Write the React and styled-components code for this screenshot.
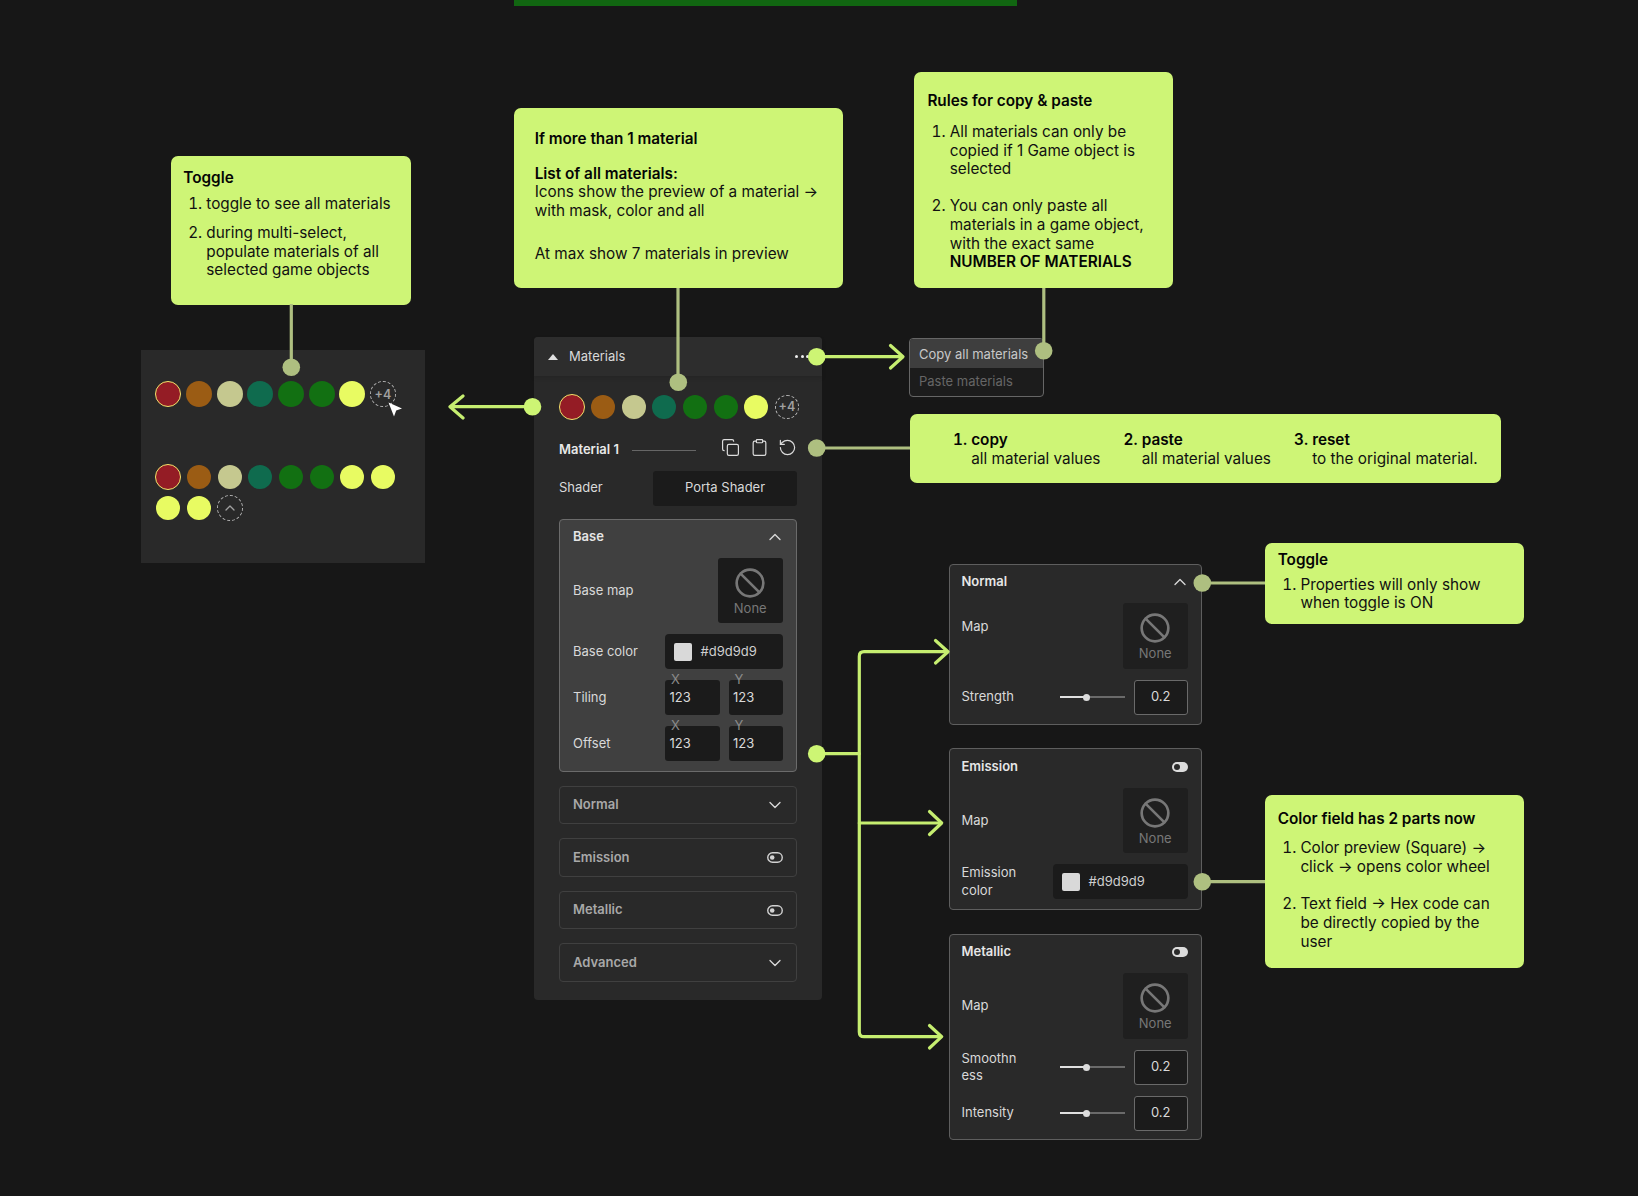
import React from "react";
import styled, { createGlobalStyle } from "styled-components";
import { Ban, ChevronDown, ChevronUp, Clipboard, Copy, RotateCcw } from "lucide-react";

const Global = createGlobalStyle`
  html, body { margin: 0; padding: 0; background: #171717; }
  body { font-family: Inter, "Liberation Sans", sans-serif; overflow: hidden; }
  * { box-sizing: border-box; }
`;

const Canvas = styled.div`
  position: relative;
  width: 1638px;
  height: 1196px;
  background: #171717;
  overflow: hidden;
`;

const TopBar = styled.div`
  position: absolute;
  left: 514px;
  top: 0;
  width: 503px;
  height: 6px;
  background: #116611;
`;

const Callout = styled.div`
  position: absolute;
  left: ${(p) => p.$x}px;
  top: ${(p) => p.$y}px;
  width: ${(p) => p.$w}px;
  height: ${(p) => p.$h}px;
  padding: ${(p) => p.$pt}px 0 0 ${(p) => p.$pl}px;
  background: #cef576;
  border-radius: 7px;
  color: #111;
  font-size: 15.3px;
  line-height: 18.67px;
  white-space: nowrap;
`;

const Title = styled.div`
  font-weight: 600;
  color: #050505;
  margin-bottom: ${(p) => p.$mb || 0}px;
`;

const Para = styled.div`
  margin-top: ${(p) => p.$mt || 0}px;
`;

const Strong = styled.span`
  font-weight: 600;
  color: #050505;
`;

const List = styled.ol`
  margin: 0;
  padding: 0 0 0 ${(p) => p.$indent || 23}px;
  display: flex;
  flex-direction: column;
  gap: ${(p) => p.$gap || 0}px;
`;

const Columns = styled.div`
  display: grid;
  grid-template-columns: repeat(3, 170.5px);
`;

const BoldList = styled.ol`
  margin: 0;
  padding: 0;
  li::marker { font-weight: 600; color: #050505; }
`;

const PreviewPanel = styled.div`
  position: absolute;
  left: 141px;
  top: 350px;
  width: 284px;
  height: 213px;
  padding: 31px 12px;
  background: #292929;
`;

const SwatchGrid = styled.div`
  display: grid;
  grid-template-columns: repeat(8, 30.67px);
  grid-auto-rows: 26px;
  row-gap: 5px;
  margin: ${(p) => p.$m || "0"};
`;

const Cell = styled.div`
  display: flex;
  align-items: center;
  justify-content: center;
`;

const Dot = styled.div`
  width: ${(p) => p.$d}px;
  height: ${(p) => p.$d}px;
  border-radius: 50%;
  background: ${(p) => p.$c};
  border: ${(p) => (p.$ring ? "1px solid #f2e46b" : "none")};
`;

const MoreDot = styled.div`
  width: ${(p) => p.$d}px;
  height: ${(p) => p.$d}px;
  border-radius: 50%;
  border: 1px dashed #b5b5b5;
  display: flex;
  align-items: center;
  justify-content: center;
  font-size: 12.5px;
  font-weight: 600;
  color: #a0a0a0;
`;

const Panel = styled.div`
  position: absolute;
  left: 534px;
  top: 337px;
  width: 288px;
  height: 663px;
  background: #292929;
  border-radius: 4px;
  color: #d9d9d9;
  font-size: 13px;
  line-height: 17.5px;
`;

const PanelHeader = styled.div`
  height: 39px;
  padding-left: 14px;
  display: flex;
  align-items: center;
  gap: 11px;
  background: #2d2d2d;
  border-radius: 4px 4px 0 0;
  box-shadow: 0 2px 4px rgba(0, 0, 0, 0.12);
`;

const Caret = styled.div`
  width: 0;
  height: 0;
  border-left: 5px solid transparent;
  border-right: 5px solid transparent;
  border-bottom: 6px solid #e0e0e0;
`;

const More = styled.div`
  margin-left: auto;
  margin-right: 13px;
  display: flex;
  gap: 2.5px;
`;

const Pip = styled.span`
  width: 3px;
  height: 3px;
  border-radius: 50%;
  background: #eee;
`;

const PanelBody = styled.div`
  padding: 18px 25px 0;
  display: flex;
  flex-direction: column;
`;

const MaterialRow = styled.div`
  margin-top: 20px;
  height: 20px;
  display: flex;
  align-items: center;
`;

const MaterialName = styled.div`
  font-weight: 600;
  color: #e8e8e8;
  width: 73px;
  flex: none;
`;

const Rule = styled.div`
  width: 64px;
  height: 1px;
  background: #666;
`;

const Tools = styled.div`
  margin-left: auto;
  margin-bottom: 5px;
  display: flex;
  align-items: center;
  gap: 9.4px;
  color: #dcdcdc;
`;

const Row = styled.div`
  display: flex;
  align-items: center;
  justify-content: space-between;
`;

const ShaderRow = styled(Row)`
  margin-top: 10.5px;
  margin-bottom: 13.5px;
`;

const ShaderSelect = styled.div`
  width: 144px;
  height: 35px;
  background: #1b1b1b;
  border-radius: 3px;
  display: flex;
  align-items: center;
  justify-content: center;
`;

const BaseBox = styled.div`
  height: 253px;
  padding: 8px 13px 0;
  background: #404040;
  border: 1px solid #6b6b6b;
  border-radius: 4px;
  display: flex;
  flex-direction: column;
  gap: 11px;
`;

const SectionHead = styled.div`
  display: flex;
  align-items: center;
  justify-content: space-between;
  height: 18px;
  margin-bottom: 1.2px;
  font-weight: 600;
  color: #e6e6e6;
`;

const HeadIcon = styled.span`
  display: flex;
  width: 20px;
  justify-content: center;
  margin-right: -2px;
  color: #d8d8d8;
`;

const NoneBox = styled.div`
  width: 65.5px;
  height: 65.3px;
  flex: none;
  background: ${(p) => p.$bg || "#1f1f1f"};
  border-radius: 3px;
  display: flex;
  flex-direction: column;
  align-items: center;
  padding-top: 9px;
  color: #777;
  font-size: 13px;
  line-height: 18px;
`;

const ColorField = styled.div`
  width: ${(p) => p.$w}px;
  height: 35px;
  background: #1b1b1b;
  border-radius: 4px;
  padding-left: 9px;
  display: flex;
  align-items: center;
  gap: 8.5px;
  color: #cfcfcf;
`;

const Swatch = styled.div`
  width: 18px;
  height: 18px;
  border-radius: 2px;
  background: #d9d9d9;
`;

const Pair = styled.div`
  display: flex;
  gap: 9px;
`;

const NumField = styled.div`
  position: relative;
  width: 54.5px;
  height: 35px;
  background: #1b1b1b;
  border-radius: 3px;
  padding-left: 4.5px;
  display: flex;
  align-items: center;
  color: #d9d9d9;
`;

const Axis = styled.span`
  position: absolute;
  left: 6px;
  top: -9px;
  color: #8a8a8a;
`;

const Collapsed = styled.div`
  height: 38.8px;
  margin-top: 13.7px;
  padding: 0 13px;
  border: 1px solid #404040;
  border-radius: 4px;
  display: flex;
  align-items: center;
  justify-content: space-between;
  font-weight: 600;
  color: #a8a8a8;
`;

const Card = styled.div`
  position: absolute;
  left: 948.5px;
  top: ${(p) => p.$y}px;
  width: 253.5px;
  height: ${(p) => p.$h}px;
  padding: 8.5px 13px 0 12px;
  background: #292929;
  border: 1px solid #5e5e5e;
  border-radius: 4px;
  color: #d9d9d9;
  font-size: 13px;
  line-height: 17.5px;
  display: flex;
  flex-direction: column;
  gap: 11px;
`;

const CardLabel = styled.div`
  width: 60px;
  overflow-wrap: anywhere;
`;

const RaisedLabel = styled.div`
  padding-bottom: 18px;
`;

const Slider = styled.div`
  position: relative;
  width: 65px;
  height: 2px;
  margin-left: auto;
  background: #6a6a6a;
`;

const SliderFill = styled.div`
  position: absolute;
  left: 0;
  top: 0;
  height: 100%;
  width: 40%;
  background: #e0e0e0;
`;

const Thumb = styled.div`
  position: absolute;
  left: 23px;
  top: -2.5px;
  width: 7px;
  height: 7px;
  border-radius: 50%;
  background: #dcdcdc;
`;

const ValueBox = styled.div`
  width: 54.5px;
  height: 35px;
  margin-left: 8.5px;
  background: #1b1b1b;
  border: 1px solid #6a6a6a;
  border-radius: 3px;
  display: flex;
  align-items: center;
  justify-content: center;
`;

const Menu = styled.div`
  position: absolute;
  left: 909px;
  top: 338px;
  width: 135px;
  height: 59px;
  background: #1c1c1c;
  border: 1px solid #666;
  border-radius: 4px;
  overflow: hidden;
  font-size: 13px;
`;

const MenuItem = styled.div`
  height: ${(p) => p.$h}px;
  padding-left: 9px;
  display: flex;
  align-items: center;
  background: ${(p) => (p.$active ? "#3e3e3e" : "transparent")};
  color: ${(p) => (p.$active ? "#c8c8c8" : "#666")};
`;

const Overlay = styled.svg`
  position: absolute;
  left: 0;
  top: 0;
  pointer-events: none;
`;

const PALETTE = ["#941c25", "#9b5c14", "#c5c88f", "#0f6b4e", "#127012", "#127012", "#e8fb62"];
const Y = "#e8fb62";

function NonePreview({ bg }) {
  return (
    <NoneBox $bg={bg}>
      <Ban size={32} strokeWidth={2} />
      <div>None</div>
    </NoneBox>
  );
}

function Swatches({ d = 24 }) {
  return PALETTE.map((c, i) => (
    <Cell key={i}>
      <Dot $c={c} $d={i === 0 ? 26 : d} $ring={i === 0} />
    </Cell>
  ));
}

function FilledToggle() {
  return (
    <svg width="16" height="10" viewBox="0 0 16 10">
      <rect width="16" height="10" rx="5" fill="#dcdcdc" />
      <circle cx="5" cy="5" r="3" fill="#2a2a2a" />
    </svg>
  );
}

function OutlineToggle() {
  return (
    <svg width="16" height="11" viewBox="0 0 16 11">
      <rect x="0.75" y="0.75" width="14.5" height="9.5" rx="4.75" fill="none" stroke="#d2d2d2" strokeWidth="1.4" />
      <circle cx="5.2" cy="5.5" r="2.3" fill="#d2d2d2" />
    </svg>
  );
}

function SliderRow({ label }) {
  return (
    <Row>
      <CardLabel>{label}</CardLabel>
      <Slider>
        <SliderFill />
        <Thumb />
      </Slider>
      <ValueBox>0.2</ValueBox>
    </Row>
  );
}

const MUTED = "#aebf80";
const BRIGHT = "#c6ee70";
const DOT = "#cdf574";

function Connectors() {
  return (
    <Overlay width="1638" height="1196" viewBox="0 0 1638 1196" fill="none">
      <g stroke={MUTED} strokeWidth="3.2">
        <path d="M291.3 304V367" />
        <path d="M678 288V382" />
        <path d="M1043.8 288V350" />
        <path d="M817 448H910" />
        <path d="M1202 583H1265" />
        <path d="M1202 881.7H1265" />
      </g>
      <g stroke={BRIGHT} strokeWidth="3.2" strokeLinecap="round" strokeLinejoin="round">
        <path d="M532 406.7H451M463 396L450 406.7L463 418" />
        <path d="M817 356.7H902M890.5 345.5L903 356.7L890.5 368" />
        <path d="M817 753.7H859.3" />
        <path d="M946 651.7H864Q859.3 651.7 859.3 656.4V1032Q859.3 1036.7 864 1036.7H940" />
        <path d="M859.3 823H940" />
        <path d="M935.5 640.5L948 651.7L935.5 663" />
        <path d="M929.5 811.5L941.7 823L929.5 834.5" />
        <path d="M929.5 1025.5L941.7 1036.7L929.5 1048" />
      </g>
      <g fill={MUTED}>
        <circle cx="291.3" cy="367.3" r="8.8" />
        <circle cx="678.3" cy="382.3" r="8.8" />
        <circle cx="1043.7" cy="350.7" r="8.8" />
        <circle cx="816.7" cy="448" r="8.8" />
        <circle cx="1202.3" cy="583" r="8.8" />
        <circle cx="1202.3" cy="881.7" r="8.8" />
      </g>
      <g fill={DOT}>
        <circle cx="532.5" cy="406.7" r="8.8" />
        <circle cx="816.7" cy="356.7" r="8.8" />
        <circle cx="816.7" cy="753.7" r="8.8" />
      </g>
      <path d="M388.5 402.5L402 408.5L396.2 410.6L394 416.5Z" fill="#fff" />
    </Overlay>
  );
}

export default function App() {
  return (
    <Canvas>
      <Global />
      <TopBar />

      <Callout $x={171.3} $y={156} $w={239.7} $h={149} $pt={13.2} $pl={12}>
        <Title $mb={7.3}>Toggle</Title>
        <List $gap={10}>
          <li>toggle to see all materials</li>
          <li>
            during multi-select,
            <br />
            populate materials of all
            <br />
            selected game objects
          </li>
        </List>
      </Callout>

      <Callout $x={514} $y={108.3} $w={329} $h={180.2} $pt={22.2} $pl={20.7}>
        <Title $mb={15.4}>If more than 1 material</Title>
        <Title>List of all materials:</Title>
        <Para>
          Icons show the preview of a material →
          <br />
          with mask, color and all
        </Para>
        <Para $mt={24}>At max show 7 materials in preview</Para>
      </Callout>

      <Callout $x={914} $y={72.3} $w={259.3} $h={215.5} $pt={19.9} $pl={13.4}>
        <Title $mb={12}>Rules for copy &amp; paste</Title>
        <List $gap={18.6} $indent={22.3}>
          <li>
            All materials can only be
            <br />
            copied if 1 Game object is
            <br />
            selected
          </li>
          <li>
            You can only paste all
            <br />
            materials in a game object,
            <br />
            with the exact same
            <br />
            <Strong>NUMBER OF MATERIALS</Strong>
          </li>
        </List>
      </Callout>

      <Callout $x={909.7} $y={413.7} $w={591} $h={69} $pt={17.5} $pl={61.5}>
        <Columns>
          <BoldList start={1}>
            <li>
              <Strong>copy</Strong>
              <br />
              all material values
            </li>
          </BoldList>
          <BoldList start={2}>
            <li>
              <Strong>paste</Strong>
              <br />
              all material values
            </li>
          </BoldList>
          <BoldList start={3}>
            <li>
              <Strong>reset</Strong>
              <br />
              to the original material.
            </li>
          </BoldList>
        </Columns>
      </Callout>

      <Callout $x={1265} $y={542.7} $w={258.7} $h={81} $pt={8.1} $pl={12.7}>
        <Title $mb={6.3}>Toggle</Title>
        <List $indent={22.7}>
          <li>
            Properties will only show
            <br />
            when toggle is ON
          </li>
        </List>
      </Callout>

      <Callout $x={1265} $y={795} $w={258.7} $h={173} $pt={14.5} $pl={12.7}>
        <Title $mb={11.3}>Color field has 2 parts now</Title>
        <List $gap={18.6} $indent={22.7}>
          <li>
            Color preview (Square) →
            <br />
            click → opens color wheel
          </li>
          <li>
            Text field → Hex code can
            <br />
            be directly copied by the
            <br />
            user
          </li>
        </List>
      </Callout>

      <PreviewPanel>
        <SwatchGrid>
          <Swatches d={26} />
          <Cell>
            <MoreDot $d={26}>+4</MoreDot>
          </Cell>
        </SwatchGrid>
        <SwatchGrid $m="56.7px 0 0">
          <Swatches />
          <Cell>
            <Dot $c={Y} $d={24} />
          </Cell>
          <Cell>
            <Dot $c={Y} $d={24} />
          </Cell>
          <Cell>
            <Dot $c={Y} $d={24} />
          </Cell>
          <Cell>
            <MoreDot $d={26}>
              <ChevronUp size={16} strokeWidth={2} />
            </MoreDot>
          </Cell>
        </SwatchGrid>
      </PreviewPanel>

      <Panel>
        <PanelHeader>
          <Caret />
          Materials
          <More>
            <Pip />
            <Pip />
            <Pip />
          </More>
        </PanelHeader>
        <PanelBody>
          <SwatchGrid $m="0 0 0 -2px">
            <Swatches />
            <Cell>
              <MoreDot $d={24}>+4</MoreDot>
            </Cell>
          </SwatchGrid>
          <MaterialRow>
            <MaterialName>Material 1</MaterialName>
            <Rule />
            <Tools>
              <Copy size={19} strokeWidth={1.5} />
              <Clipboard size={19} strokeWidth={1.5} />
              <RotateCcw size={19} strokeWidth={1.5} />
            </Tools>
          </MaterialRow>
          <ShaderRow>
            Shader
            <ShaderSelect>Porta Shader</ShaderSelect>
          </ShaderRow>
          <BaseBox>
            <SectionHead>
              Base
              <HeadIcon>
                <ChevronUp size={20} strokeWidth={1.6} />
              </HeadIcon>
            </SectionHead>
            <Row>
              Base map
              <NonePreview bg="#1b1b1b" />
            </Row>
            <Row>
              Base color
              <ColorField $w={118}>
                <Swatch />
                #d9d9d9
              </ColorField>
            </Row>
            <Row>
              Tiling
              <Pair>
                <NumField>
                  <Axis>X</Axis>123
                </NumField>
                <NumField>
                  <Axis>Y</Axis>123
                </NumField>
              </Pair>
            </Row>
            <Row>
              Offset
              <Pair>
                <NumField>
                  <Axis>X</Axis>123
                </NumField>
                <NumField>
                  <Axis>Y</Axis>123
                </NumField>
              </Pair>
            </Row>
          </BaseBox>
          <Collapsed>
            Normal
            <HeadIcon>
              <ChevronDown size={20} strokeWidth={1.6} />
            </HeadIcon>
          </Collapsed>
          <Collapsed>
            Emission
            <HeadIcon>
              <OutlineToggle />
            </HeadIcon>
          </Collapsed>
          <Collapsed>
            Metallic
            <HeadIcon>
              <OutlineToggle />
            </HeadIcon>
          </Collapsed>
          <Collapsed>
            Advanced
            <HeadIcon>
              <ChevronDown size={20} strokeWidth={1.6} />
            </HeadIcon>
          </Collapsed>
        </PanelBody>
      </Panel>

      <Menu>
        <MenuItem $active $h={29}>Copy all materials</MenuItem>
        <MenuItem $h={26}>Paste materials</MenuItem>
      </Menu>

      <Card $y={563.7} $h={161}>
        <SectionHead>
          Normal
          <HeadIcon>
            <ChevronUp size={20} strokeWidth={1.6} />
          </HeadIcon>
        </SectionHead>
        <Row>
          <RaisedLabel>Map</RaisedLabel>
          <NonePreview />
        </Row>
        <SliderRow label="Strength" />
      </Card>

      <Card $y={748.3} $h={161.4}>
        <SectionHead>
          Emission
          <FilledToggle />
        </SectionHead>
        <Row>
          Map
          <NonePreview />
        </Row>
        <Row>
          <CardLabel>Emission color</CardLabel>
          <ColorField $w={135}>
            <Swatch />
            #d9d9d9
          </ColorField>
        </Row>
      </Card>

      <Card $y={933.7} $h={206.6}>
        <SectionHead>
          Metallic
          <FilledToggle />
        </SectionHead>
        <Row>
          Map
          <NonePreview />
        </Row>
        <SliderRow label="Smoothness" />
        <SliderRow label="Intensity" />
      </Card>

      <Connectors />
    </Canvas>
  );
}
